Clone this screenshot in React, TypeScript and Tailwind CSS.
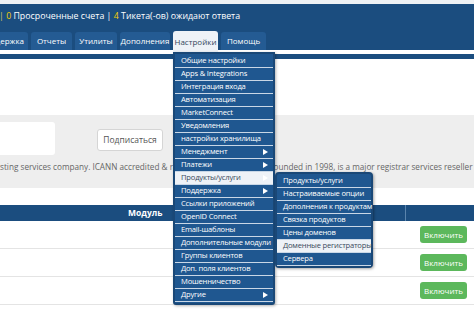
import React from 'react';

type Item = { label: string; arrow?: boolean; active?: boolean };

const mainItems: Item[] = [
  { label: 'Общие настройки' },
  { label: 'Apps & Integrations' },
  { label: 'Интеграция входа' },
  { label: 'Автоматизация' },
  { label: 'MarketConnect' },
  { label: 'Уведомления' },
  { label: 'настройки хранилища' },
  { label: 'Менеджмент', arrow: true },
  { label: 'Платежи', arrow: true },
  { label: 'Продукты/услуги', arrow: true, active: true },
  { label: 'Поддержка', arrow: true },
  { label: 'Ссылки приложений' },
  { label: 'OpenID Connect' },
  { label: 'Email-шаблоны' },
  { label: 'Дополнительные модули' },
  { label: 'Группы клиентов' },
  { label: 'Доп. поля клиентов' },
  { label: 'Мошенничество' },
  { label: 'Другие', arrow: true },
];

const subItems: Item[] = [
  { label: 'Продукты/услуги' },
  { label: 'Настраиваемые опции' },
  { label: 'Дополнения к продуктам' },
  { label: 'Связка продуктов' },
  { label: 'Цены доменов' },
  { label: 'Доменные регистраторы', active: true },
  { label: 'Сервера' },
];

const tabs = [
  { label: 'Поддержка', w: 'w-[49px] justify-end pr-[4px]' },
  { label: 'Отчеты', w: 'w-[41px] justify-center' },
  { label: 'Утилиты', w: 'w-[42px] justify-center' },
  { label: 'Дополнения', w: 'w-[50px] justify-center' },
];

const MenuRow = ({ item }: { item: Item }) => (
  <div
    className={
      'relative flex items-center h-[13px] px-[6px] border-b border-[#c9d7e6] ' +
      (item.active ? 'bg-[#eef2f7] text-[#3a4a5c]' : 'text-white')
    }
  >
    <span className="whitespace-nowrap leading-none tracking-[-0.2px]">{item.label}</span>
    {item.arrow && (
      <span className="absolute right-[5px] top-[3px] w-0 h-0 border-y-[3px] border-y-transparent border-l-[5px] border-l-white" />
    )}
  </div>
);

export default function App() {
  return (
    <div className="relative w-[474px] h-[310px] overflow-hidden bg-white font-['Open_Sans',sans-serif]">
      {/* header */}
      <div className="h-[4px] bg-[#eef1f4]" />
      <div className="h-[46px] bg-[#1b4d7f] flex flex-col">
        <div className="mt-[7px] text-[8.8px] text-white whitespace-nowrap leading-[10px] -ml-[1px]">
          <span className="text-[#d6c25a]">|</span> <span className="text-[#f5d000]">0</span> Просроченные счета |{' '}
          <span className="text-[#f5d000]">4</span> Тикета(-ов) ожидают ответа
        </div>
        <div className="mt-auto flex items-end gap-[3px] -ml-[21px]">
          {tabs.map((t) => (
            <div
              key={t.label}
              className={`${t.w} h-[18px] bg-[#245b93] rounded-t-[3px] flex items-center text-[8px] text-white whitespace-nowrap overflow-hidden`}
            >
              {t.label}
            </div>
          ))}
          <div className="w-[45px] h-[21px] -mb-[2px] bg-[#eef2f7] rounded-t-[3px] flex items-center justify-center text-[8px] text-[#34475c] whitespace-nowrap">
            Настройки
          </div>
          <div className="w-[45px] h-[18px] bg-[#245b93] rounded-t-[3px] flex items-center justify-center text-[8px] text-white whitespace-nowrap">
            Помощь
          </div>
        </div>
      </div>
      <div className="h-[4px] bg-white" />
      <div className="h-[5px] bg-[#1b4d7f]" />

      {/* content */}
      <div className="h-[56px]" />
      <div className="h-[73px] bg-[#eeeeee] flex flex-col">
        <div className="flex items-start mt-[7px]">
          <div className="w-[55px] h-[33px] bg-white rounded-r-[3px]" />
          <div className="ml-[42px] mt-[7px] w-[66px] h-[22px] bg-white border border-[#d5d5d5] rounded-[3px] flex items-center justify-center text-[8.5px] text-[#555]">
            Подписаться
          </div>
        </div>
        {/* middle part of this line sits under the dropdown */}
        <div className="mt-[6px] text-[8.2px] text-[#666] whitespace-nowrap leading-[12px]">
          sting services company. ICANN accredited &amp; ra
          <span className="inline-block w-[96px] overflow-hidden align-top">ted domain registrar, f</span>
          ounded in 1998, is a major registrar services reseller and
        </div>
      </div>
      <div className="h-[17px]" />

      {/* table */}
      <div className="h-[16px] bg-[#1b4d7f] flex text-white text-[8.5px] font-bold">
        <div className="w-[405px] flex items-center pl-[128px]">Модуль</div>
        <div className="w-px bg-[#5a84ad]" />
        <div className="flex-1" />
      </div>
      {[0, 1, 2].map((i) => (
        <div key={i} className="h-[28px] border-b border-[#e4e4e4] flex items-center justify-end pr-[7px]">
          <div className="w-[47px] h-[17px] bg-[#5cb85c] rounded-[3px] flex items-center justify-center text-[8px] text-white">
            Включить
          </div>
        </div>
      ))}

      {/* dropdown */}
      <div className="absolute left-[173px] top-[52px] w-[102px] h-[253px] bg-[#1f5790] border-2 border-[#1a4877] rounded-b-[3px] pt-[1px] text-[7.6px] shadow-[1px_1px_3px_rgba(0,0,0,0.3)]">
        {mainItems.map((it) => (
          <MenuRow key={it.label} item={it} />
        ))}
      </div>
      <div className="absolute left-[275px] top-[172px] w-[98px] h-[96px] bg-[#1f5790] border-2 border-[#1a4877] rounded-[4px] pt-[1px] text-[7.6px] shadow-[1px_1px_3px_rgba(0,0,0,0.35)]">
        {subItems.map((it) => (
          <MenuRow key={it.label} item={it} />
        ))}
      </div>
    </div>
  );
}
